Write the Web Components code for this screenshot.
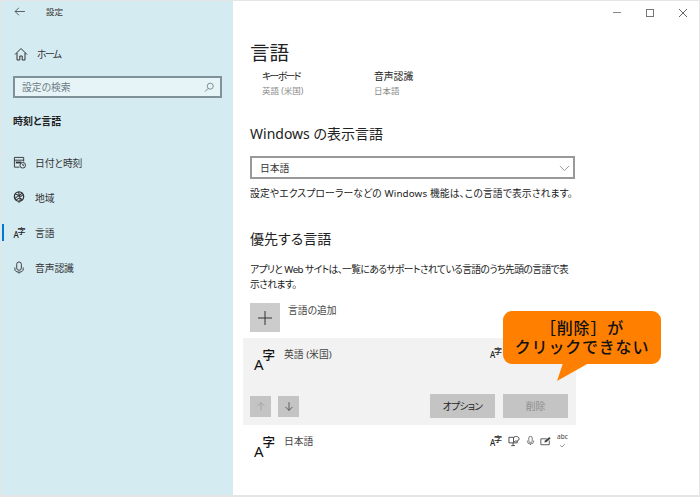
<!DOCTYPE html>
<html lang="ja">
<head>
<meta charset="utf-8">
<title>設定</title>
<style>
html, body { margin: 0; height: 100%; background: #fff; overflow: hidden; }
body {
    font-family: "Noto Sans", "Noto Sans CJK JP", sans-serif;
    font-size: 9.8px;
    color: #222;
    font-feature-settings: "palt";
}
</style>
</head>
<body>

<settings-window>
    <settings-sidebar slot="side">
        <nav-item icon="clock">日付と時刻</nav-item>
        <nav-item icon="globe">地域</nav-item>
        <nav-item icon="lang" active>言語</nav-item>
        <nav-item icon="mic">音声認識</nav-item>
    </settings-sidebar>

    <language-page slot="main"></language-page>

    <call-out slot="over">［削除］が<br>クリックできない</call-out>
</settings-window>

<script>
const ICONS = {
    back: '<path d="M1 6h13M6 1 1 6l5 5" fill="none"/>',
    home: '<path d="M1 7.5 7 1.5l6 6M3 6v7h2.8V9h2.4v4H11V6" fill="none"/>',
    search: '<circle cx="7.5" cy="5" r="3.6" fill="none"/><path d="M5 7.6 1.2 11.6" fill="none"/>',
    clock: '<path d="M7 12H1.5V1.5h10V6M1.5 4.5h10" fill="none"/><path d="M3 6h6v2H3z" stroke="none" fill="currentColor"/><circle cx="10.500" cy="10" r="3" fill="none"/><path d="M10.500 8.500V10h1.500" fill="none"/>',
    globe: '<circle cx="6.500" cy="6" r="5" fill="none" stroke-width="1.400"/><path d="M2 3l5 2 3-3M2 8l4-3 4 5M6 1l2 10M11 4 3 10" fill="none" stroke-width="1.100"/><path d="M6.500 11v2" fill="none"/>',
    mic: '<rect x="4" y="1" width="5" height="9" rx="2.500" fill="none"/><path d="M2 7v1.500a4.500 3.500 0 0 0 9 0V7M6.500 12v1.500" fill="none"/>',
    arrowUp: '<path d="M7 13V1.500M2 6.500l5-5 5 5" fill="none"/>',
    arrowDown: '<path d="M7 1v11.500M2 7.500l5 5 5-5" fill="none"/>',
    plus: '<path d="M7 0v14M0 7h14" fill="none"/>',
    chevron: '<path d="M1 1l5.500 5.500L12 1" fill="none"/>',
    speech: '<path d="M1 2h9v6H1zM3.500 11h4M5.500 8v3" fill="none"/><path d="M6 2.500c1-2 6-2 6 1.200 0 2-2 2.600-4 2.300L6 7.500z" fill="#fff"/>',
    write: '<path d="M1 4h7M1 4v7h10V6" fill="none"/><path d="M5 8l1-2 5-4 1.500 1.500-5 4.500z" fill="currentColor" stroke="none"/>',
    spell: '<path d="M3 9l3 3 5-5" fill="none"/>'
};

function svgIcon(name, w, h, vw, vh, stroke) {
    return `<svg width="${w}" height="${h}" viewBox="0 0 ${vw} ${vh}" stroke="currentColor" stroke-width="${stroke || 1}" style="display:block;flex:none">${ICONS[name]}</svg>`;
}

class SettingsWindow extends HTMLElement {
    constructor() {
        super();
        const shadow = this.attachShadow({ mode: 'open' });
        shadow.innerHTML = `
          <style>
            :host { display: block; position: relative; width: 700px; height: 497px; box-sizing: border-box; border: 1px solid #e6e6e6; border-bottom-width: 2px; background: #fff; }
            .wrap { display: flex; height: 100%; }
            .right { flex: 1; min-width: 0; display: flex; flex-direction: column; }
            .controls { display: flex; justify-content: flex-end; height: 23px; color: #777; }
            .controls span { width: 33px; display: flex; align-items: center; justify-content: center; }
            .min { width: 8px; height: 1px; background: #888; }
            .max { width: 6px; height: 6px; border: 1px solid #777; }
            .bubble { position: absolute; left: 502px; top: 310px; }
          </style>
          <div class="wrap">
            <slot name="side"></slot>
            <div class="right">
              <div class="controls">
                <span><i class="min"></i></span>
                <span><i class="max"></i></span>
                <span><svg width="8" height="8" viewBox="0 0 8 8" stroke="#666" stroke-width="1"><path d="M0 0l8 8M8 0 0 8"/></svg></span>
              </div>
              <slot name="main"></slot>
            </div>
          </div>
          <div class="bubble"><slot name="over"></slot></div>
        `;
    }
}

class SettingsSidebar extends HTMLElement {
    constructor() {
        super();
        const shadow = this.attachShadow({ mode: 'open' });
        shadow.innerHTML = `
          <style>
            :host { display: block; width: 232px; flex: none; background: #d5ebf2; color: #333; }
            .title { display: flex; align-items: center; height: 20px; padding-left: 13px; font-size: 8.500px; }
            .title span { margin-left: 20px; }
            .home { display: flex; align-items: center; height: 20px; margin-top: 23px; padding-left: 13px; gap: 9px; }
            .home span { letter-spacing: -1.500px; }
            .search { display: flex; align-items: center; justify-content: space-between; box-sizing: border-box; margin: 12px 0 0 12px; width: 209px; height: 22px; padding: 0 6px 0 7px; border: 2px solid #7f9299; background: #e6f3f7; color: #6e7d83; }
            h2 { margin: 15px 0 16px 12px; font-size: 10px; font-weight: 700; line-height: 16px; color: #222; }
          </style>
          <div class="title">${svgIcon('back', 12, 9, 15, 12)}<span>設定</span></div>
          <div class="home">${svgIcon('home', 14, 14, 14, 14)}<span>ホーム</span></div>
          <div class="search"><span>設定の検索</span>${svgIcon('search', 10, 10, 12, 12)}</div>
          <h2>時刻と言語</h2>
          <slot></slot>
        `;
    }
}

class NavItem extends HTMLElement {
    constructor() {
        super();
        const shadow = this.attachShadow({ mode: 'open' });
        const name = this.getAttribute('icon');
        const icon = name === 'lang' ? '<lang-glyph size="small"></lang-glyph>' : svgIcon(name, 13, 13, 14, 14);
        shadow.innerHTML = `
          <style>
            :host { display: flex; align-items: center; height: 35px; padding-left: 12px; position: relative; }
            .ico { width: 13px; margin-right: 9px; display: flex; justify-content: center; }
            span:last-child { letter-spacing: -.1px; }
            :host([active])::before { content: ''; position: absolute; left: 1px; top: 9px; width: 2px; height: 17px; background: #0078d7; }
          </style>
          <span class="ico">${icon}</span><span><slot></slot></span>
        `;
    }
}

class LangGlyph extends HTMLElement {
    constructor() {
        super();
        const shadow = this.attachShadow({ mode: 'open' });
        shadow.innerHTML = `
          <style>
            :host { display: inline-block; position: relative; width: 12px; height: 12px; color: #222; font-family: "Noto Sans", "Noto Sans CJK JP", sans-serif; line-height: 1; font-weight: 500; }
            :host([size="large"]) { width: 21px; height: 23px; margin-top: 2px; color: #111; }
            span { position: absolute; }
            .a { left: 0; bottom: 0; font-size: 8px; }
            .z { right: 0; top: 0; font-size: 8px; }
            :host([size="large"]) .a { font-size: 15px; font-weight: 400; }
            :host([size="large"]) .z { top: 1px; font-size: 12.500px; }
          </style>
          <span class="a">A</span><span class="z">字</span>
        `;
    }
}

class LanguagePage extends HTMLElement {
    constructor() {
        super();
        const shadow = this.attachShadow({ mode: 'open' });
        shadow.innerHTML = `
          <style>
            :host { display: block; padding: 14px 0 0 17px; color: #222; }
            h1 { margin: 0; font-size: 19.600px; font-weight: 400; line-height: 30px; }
            h3 { margin: 0; font-size: 14px; font-weight: 400; line-height: 20px; }
            p { margin: 0; width: 340px; line-height: 15px; }
            .status { display: flex; padding-left: 12px; margin-top: 2px; }
            .status div { width: 112px; }
            .status b { display: block; font-weight: 400; line-height: 14px; }
            .status b.narrow { letter-spacing: -1.600px; }
            .status small { display: block; font-size: 8.500px; line-height: 14px; color: #888; }
            .select { display: flex; align-items: center; justify-content: space-between; box-sizing: border-box; width: 325px; height: 23px; margin: 12px 0 7px; padding: 0 3px 0 8px; border: 2px solid #999; color: #333; }
            .chev { color: #888; }
            .add { display: flex; margin-top: 11px; gap: 8px; }
            .plus { display: flex; align-items: center; justify-content: center; width: 30px; height: 29px; background: #ccc; color: #333; }
            .add span { line-height: 15px; color: #444; }
            .list { margin: 6px 0 0 -7px; width: 333px; }
          </style>
          <h1>言語</h1>
          <div class="status">
            <div><b class="narrow">キーボード</b><small>英語 (米国)</small></div>
            <div><b>音声認識</b><small>日本語</small></div>
          </div>
          <h3 style="margin-top:26px">Windows の表示言語</h3>
          <div class="select"><span>日本語</span><span class="chev">${svgIcon('chevron', 11, 6, 13, 7)}</span></div>
          <p style="letter-spacing:.13px">設定やエクスプローラーなどの Windows 機能は、この言語で表示されます。</p>
          <h3 style="margin-top:28px">優先する言語</h3>
          <p style="margin-top:13px;letter-spacing:-.6px">アプリと Web サイトは、一覧にあるサポートされている言語のうち先頭の言語で表<br>示されます。</p>
          <div class="add"><div class="plus">${svgIcon('plus', 14, 14, 14, 14)}</div><span>言語の追加</span></div>
          <div class="list">
            <lang-row name="英語 (米国)" selected features="lang"></lang-row>
            <lang-row name="日本語" features="lang speech mic write spell"></lang-row>
          </div>
        `;
    }
}

class LangRow extends HTMLElement {
    constructor() {
        super();
        const shadow = this.attachShadow({ mode: 'open' });
        const features = (this.getAttribute('features') || '').split(' ').map(f => {
            if (f === 'lang') return '<lang-glyph></lang-glyph>';
            if (f === 'speech') return svgIcon('speech', 12, 12, 13, 12);
            if (f === 'mic') return svgIcon('mic', 9, 13, 13, 14);
            if (f === 'write') return svgIcon('write', 11, 11, 13, 12);
            return `<span class="abc">abc${svgIcon('spell', 9, 7, 14, 12)}</span>`;
        }).join('');
        const selected = this.hasAttribute('selected');
        shadow.innerHTML = `
          <style>
            :host { display: block; box-sizing: border-box; height: 87px; padding: 9px 8px 0 11px; color: #444; }
            :host([selected]) { background: #f2f2f2; }
            :host(:not([selected])) { height: 69px; padding-top: 9px; }
            .top { display: flex; align-items: flex-start; }
            .name { flex: 1; margin: 0 0 0 9px; line-height: 15px; }
            .feat { display: flex; align-items: center; justify-content: space-between; width: 78px; color: #444; }
            .abc { display: flex; flex-direction: column; align-items: center; font-size: 6.500px; line-height: 6px; width: 11px; }
            .actions { display: flex; align-items: center; margin: 22px 0 0 -4px; }
            .sq { display: flex; align-items: center; justify-content: center; width: 21px; height: 21px; background: #c4c4c4; color: #333; margin-right: 7px; }
            .sq.off { color: #999; }
            .btn { display: flex; align-items: center; justify-content: center; width: 65px; height: 24px; background: #c4c4c4; color: #222; margin-left: 8px; }
            .btn.narrow { letter-spacing: -.7px; }
            .btn.off { color: #8c8c8c; }
            .sp { flex: 1; }
          </style>
          <div class="top">
            <lang-glyph size="large"></lang-glyph>
            <div class="name">${this.getAttribute('name')}</div>
            <div class="feat">${features}</div>
          </div>
          ${selected ? `
          <div class="actions">
            <div class="sq off">${svgIcon('arrowUp', 10, 11, 14, 14)}</div>
            <div class="sq">${svgIcon('arrowDown', 10, 11, 14, 14)}</div>
            <div class="sp"></div>
            <div class="btn narrow">オプション</div>
            <div class="btn off">削除</div>
          </div>` : ''}
        `;
    }
}

class CallOut extends HTMLElement {
    constructor() {
        super();
        const shadow = this.attachShadow({ mode: 'open' });
        shadow.innerHTML = `
          <style>
            :host { display: block; position: relative; box-sizing: border-box; width: 158px; height: 53px; padding-top: 8px; background: #ff8000; border-radius: 9px; color: #111; font-size: 16px; line-height: 19px; letter-spacing: .8px; text-align: center; font-weight: 500; font-feature-settings: normal; }
            svg { position: absolute; left: 50px; top: 52px; }
          </style>
          <slot></slot>
          <svg width="36" height="19" viewBox="0 0 36 19"><path d="M10 0h26L4 18z" fill="#ff8000"/></svg>
        `;
    }
}

customElements.define('lang-glyph', LangGlyph);
customElements.define('nav-item', NavItem);
customElements.define('settings-sidebar', SettingsSidebar);
customElements.define('lang-row', LangRow);
customElements.define('language-page', LanguagePage);
customElements.define('call-out', CallOut);
customElements.define('settings-window', SettingsWindow);
</script>
</body>
</html>
